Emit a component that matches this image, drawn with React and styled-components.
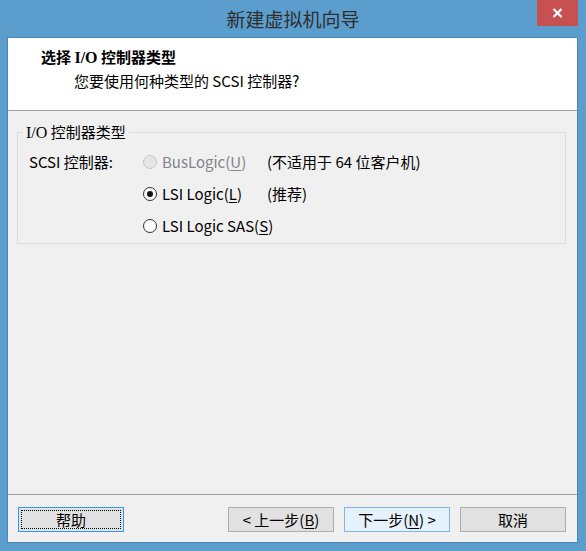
import React from 'react';
import styled, { createGlobalStyle } from 'styled-components';

const GlobalStyle = createGlobalStyle`
  html, body {
    margin: 0;
    padding: 0;
  }
  body {
    font-family: "Noto Sans CJK SC", "Noto Sans", sans-serif;
    font-size: 15px;
    color: #000;
  }
`;

const Window = styled.div`
  width: 586px;
  height: 551px;
  background: #5b9dcc;
  display: flex;
  flex-direction: column;
  box-sizing: border-box;
`;

const TitleBar = styled.div`
  height: 37px;
  display: grid;
  grid-template-columns: 1fr auto 1fr;
  align-items: start;
`;

const Title = styled.div`
  grid-column: 2;
  font-size: 19px;
  line-height: 38px;
  color: #2e2e2e;
`;

const CloseButton = styled.div`
  grid-column: 3;
  justify-self: end;
  margin-right: 8px;
  width: 41px;
  height: 26px;
  background: #c75050;
  color: #fff;
  display: flex;
  align-items: center;
  justify-content: center;
`;

const Client = styled.div`
  flex: 1;
  margin: 0 8px 8px 7px;
  border: 1px solid #4a86b6;
  background: #f0f0f0;
  display: flex;
  flex-direction: column;
`;

const Header = styled.div`
  height: 72px;
  background: #fff;
  border-bottom: 1px solid #a0a0a0;
  box-sizing: content-box;
  display: flex;
  flex-direction: column;
`;

const HeaderTitle = styled.div`
  margin: 9px 0 0 33px;
  font-weight: bold;
  font-size: 15px;
  line-height: 20px;

  .latin {
    font-family: "Liberation Serif", serif;
    font-size: 16px;
  }
`;

const HeaderSub = styled.div`
  margin: 3px 0 0 66px;
  line-height: 20px;
`;

const Body = styled.div`
  flex: 1;
  padding: 12px 11px 0 9px;
`;

const Group = styled.fieldset`
  margin: 0;
  padding: 4px 0 1px 11px;
  border: 1px solid #dcdcdc;
  display: grid;
  grid-template-columns: 114px 124px 1fr;
  grid-auto-rows: 32px;
  align-items: center;
`;

const Legend = styled.legend`
  margin-left: -6px;
  padding: 0 3px;
  line-height: 18px;

  .latin {
    font-family: "Liberation Serif", serif;
    font-size: 16px;
  }
`;

const FieldLabel = styled.div`
  line-height: 20px;
`;

const Choice = styled.label`
  display: flex;
  align-items: center;
  gap: 5px;
  line-height: 20px;
  white-space: nowrap;
  color: ${(p) => (p.$disabled ? '#838389' : '#000')};
`;

const RadioCircle = styled.span`
  flex: none;
  width: 14px;
  height: 14px;
  border-radius: 50%;
  box-sizing: border-box;
  border: 1px solid ${(p) => (p.$disabled ? '#c4c4c4' : '#333')};
  background: ${(p) => (p.$disabled ? '#e6e6e6' : '#fff')};
  display: flex;
  align-items: center;
  justify-content: center;

  &::after {
    content: '';
    width: 6px;
    height: 6px;
    border-radius: 50%;
    background: #111;
    display: ${(p) => (p.$checked ? 'block' : 'none')};
  }
`;

const Note = styled.div`
  line-height: 20px;
`;

const Footer = styled.div`
  border-top: 1px solid #a0a0a0;
  padding: 12px 11px 10px 10px;
  display: flex;
  gap: 10px;
`;

const Button = styled.div`
  width: 106px;
  height: 25px;
  box-sizing: border-box;
  border: 1px solid ${(p) => (p.$default ? '#7eb4ea' : p.$focused ? '#3399ff' : '#adadad')};
  background: ${(p) => (p.$default ? '#e5f1fb' : '#e1e1e1')};
  display: flex;
  align-items: center;
  justify-content: center;
  line-height: 20px;
  white-space: pre;
  margin-right: ${(p) => (p.$push ? 'auto' : '0')};
  position: relative;

  ${(p) =>
    p.$focused &&
    `
    &::before {
      content: '';
      position: absolute;
      inset: 2px;
      border: 1px dotted #000;
    }
  `}
`;

const U = styled.span`
  text-decoration: underline;
  text-underline-offset: 2px;
`;

export default function App() {
  return (
    <>
      <GlobalStyle />
      <Window>
        <TitleBar>
          <Title>新建虚拟机向导</Title>
          <CloseButton>
            <svg width="11" height="10" viewBox="0 0 11 10">
              <path d="M1.5 1 L9.5 9 M9.5 1 L1.5 9" stroke="#fff" strokeWidth="2.2" />
            </svg>
          </CloseButton>
        </TitleBar>
        <Client>
          <Header>
            <HeaderTitle>
              选择 <span className="latin">I/O</span> 控制器类型
            </HeaderTitle>
            <HeaderSub>您要使用何种类型的 SCSI 控制器?</HeaderSub>
          </Header>
          <Body>
            <Group>
              <Legend>
                <span className="latin">I/O</span> 控制器类型
              </Legend>
              <FieldLabel>SCSI 控制器:</FieldLabel>
              <Choice $disabled>
                <RadioCircle $disabled />
                <span>
                  BusLogic(<U>U</U>)
                </span>
              </Choice>
              <Note>(不适用于 64 位客户机)</Note>

              <span />
              <Choice>
                <RadioCircle $checked />
                <span>
                  LSI Logic(<U>L</U>)
                </span>
              </Choice>
              <Note>(推荐)</Note>

              <span />
              <Choice>
                <RadioCircle />
                <span>
                  LSI Logic SAS(<U>S</U>)
                </span>
              </Choice>
            </Group>
          </Body>
          <Footer>
            <Button $focused $push>帮助</Button>
            <Button>
              <span>
                &lt; 上一步(<U>B</U>)
              </span>
            </Button>
            <Button $default>
              <span>
                下一步(<U>N</U>) &gt;
              </span>
            </Button>
            <Button>取消</Button>
          </Footer>
        </Client>
      </Window>
    </>
  );
}
